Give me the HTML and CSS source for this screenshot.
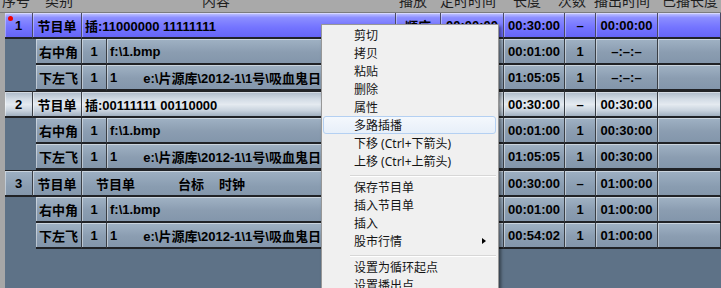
FILE: index.html
```html
<!DOCTYPE html>
<html lang="zh-CN">
<head>
<meta charset="utf-8">
<title>节目单</title>
<link rel="stylesheet" href="styles.css">
</head>
<body>
<div class="hdr">
  <div class="hdr-in">
    <span class="h1">序号</span><span class="h2">类别</span><span class="h3">内容</span><span class="h4">播放</span><span class="h5">定时时间</span><span class="h6">长度</span><span class="h7">次数</span><span class="h8">播出时间</span><span class="h9">已播长度</span>
  </div>
</div>
<div class="tbl">
  <div class="row main sel">
    <div class="c no"><i class="dot"></i>1</div>
    <div class="c">节目单</div>
    <div class="c txt">插:11000000 11111111</div>
    <div class="c">顺序</div>
    <div class="c">00:00:00</div>
    <div class="c">00:30:00</div>
    <div class="c">–</div>
    <div class="c">00:00:00</div>
    <div class="c"></div>
  </div>
  <div class="row sub">
    <div class="indent"></div>
    <div class="c">右中角</div>
    <div class="c">1</div>
    <div class="c txt">f:\1.bmp</div>
    <div class="c"></div>
    <div class="c">00:00:00</div>
    <div class="c">00:01:00</div>
    <div class="c">1</div>
    <div class="c">–:–:–</div>
    <div class="c"></div>
  </div>
  <div class="row sub">
    <div class="indent"></div>
    <div class="c">下左飞</div>
    <div class="c">1</div>
    <div class="c txt">1<span class="path">e:\片源库\2012-1\1号\吸血鬼日记.avi</span></div>
    <div class="c"></div>
    <div class="c">00:00:00</div>
    <div class="c">01:05:05</div>
    <div class="c">1</div>
    <div class="c">–:–:–</div>
    <div class="c"></div>
  </div>

  <div class="row main lite">
    <div class="c no">2</div>
    <div class="c">节目单</div>
    <div class="c txt">插:00111111 00110000</div>
    <div class="c">顺序</div>
    <div class="c"></div>
    <div class="c">00:30:00</div>
    <div class="c">–</div>
    <div class="c">00:30:00</div>
    <div class="c"></div>
  </div>
  <div class="row sub">
    <div class="indent"></div>
    <div class="c">右中角</div>
    <div class="c">1</div>
    <div class="c txt">f:\1.bmp</div>
    <div class="c"></div>
    <div class="c">00:00:00</div>
    <div class="c">00:01:00</div>
    <div class="c">1</div>
    <div class="c">00:30:00</div>
    <div class="c"></div>
  </div>
  <div class="row sub">
    <div class="indent"></div>
    <div class="c">下左飞</div>
    <div class="c">1</div>
    <div class="c txt">1<span class="path">e:\片源库\2012-1\1号\吸血鬼日记.avi</span></div>
    <div class="c"></div>
    <div class="c">00:00:00</div>
    <div class="c">01:05:05</div>
    <div class="c">1</div>
    <div class="c">00:30:00</div>
    <div class="c"></div>
  </div>

  <div class="row main">
    <div class="c no">3</div>
    <div class="c">节目单</div>
    <div class="c txt"><span class="t1">节目单</span><span class="t2">台标</span><span class="t3">时钟</span></div>
    <div class="c">顺序</div>
    <div class="c"></div>
    <div class="c">00:30:00</div>
    <div class="c">–</div>
    <div class="c">01:00:00</div>
    <div class="c"></div>
  </div>
  <div class="row sub">
    <div class="indent"></div>
    <div class="c">右中角</div>
    <div class="c">1</div>
    <div class="c txt">f:\1.bmp</div>
    <div class="c"></div>
    <div class="c">00:00:00</div>
    <div class="c">00:01:00</div>
    <div class="c">1</div>
    <div class="c">01:00:00</div>
    <div class="c"></div>
  </div>
  <div class="row sub">
    <div class="indent"></div>
    <div class="c">下左飞</div>
    <div class="c">1</div>
    <div class="c txt">1<span class="path">e:\片源库\2012-1\1号\吸血鬼日记.avi</span></div>
    <div class="c"></div>
    <div class="c">00:00:00</div>
    <div class="c">00:54:02</div>
    <div class="c">1</div>
    <div class="c">01:00:00</div>
    <div class="c"></div>
  </div>
</div>

<div class="menu">
  <div class="mi">剪切</div>
  <div class="mi">拷贝</div>
  <div class="mi">粘贴</div>
  <div class="mi">删除</div>
  <div class="mi">属性</div>
  <div class="mi hot">多路插播</div>
  <div class="mi">下移 (Ctrl+下箭头)</div>
  <div class="mi">上移 (Ctrl+上箭头)</div>
  <div class="sep"></div>
  <div class="mi">保存节目单</div>
  <div class="mi">插入节目单</div>
  <div class="mi">插入</div>
  <div class="mi sub-arrow">股市行情</div>
  <div class="sep"></div>
  <div class="mi">设置为循环起点</div>
  <div class="mi">设置播出点</div>
</div>
</body>
</html>
```

FILE: styles.css
```css
html, body {
  margin: 0;
  padding: 0;
}
body {
  background: #a7a7a7;
  width: 721px;
  height: 288px;
  overflow: hidden;
  position: relative;
  font-family: "Liberation Sans", "Noto Sans CJK SC", sans-serif;
}

/* header */
.hdr {
  height: 12px;
  border-bottom: 1px solid #7c7c7c;
  background: #a9a9a9;
  overflow: hidden;
  color: #1e1e1e;
  font-family: "Noto Sans CJK SC", sans-serif;
  font-size: 14px;
  white-space: nowrap;
}
.hdr-in {
  display: flex;
  margin-top: -8px;
  line-height: 16px;
}
.hdr-in span { flex: none; }
.h1 { margin-left: 2px; }
.h2 { margin-left: 15px; }
.h3 { margin-left: 129px; }
.h4 { margin-left: 169px; }
.h5 { margin-left: 13px; }
.h6 { margin-left: 17px; }
.h7 { margin-left: 17px; }
.h8 { margin-left: 8px; }
.h9 { margin-left: 12px; }

/* table */
.tbl {
  margin-left: 5px;
  background: #5e7287;
  height: 275px;
  overflow: hidden;
}
.row {
  display: grid;
}
.main {
  grid-template-columns: 28px 49px 314px 45px 63px 61px 31px 62px 1fr;
  background: linear-gradient(#9fb1c4, #8a9db1 60%, #8295aa);
}
.sub {
  grid-template-columns: 31px 46px 25px 289px 45px 63px 61px 31px 62px 1fr;
}
.indent {
  background: #5e7287;
}
.c {
  height: 24px;
  display: flex;
  align-items: center;
  justify-content: center;
  border-right: 1px solid #3a3f46;
  border-bottom: 2px solid #202226;
  box-shadow: inset 1px 1px 0 rgba(255, 255, 255, 0.45);
  font-size: 13px;
  font-weight: bold;
  color: #000;
  white-space: nowrap;
  overflow: hidden;
}
.sub .c {
  background: linear-gradient(#a0b2c4, #8b9db1 55%, #8396ab);
}
.sub + .main .c {
  border-top: 1px solid #202226;
}
.c.txt {
  justify-content: flex-start;
  padding-left: 3px;
}
.c.no {
  position: relative;
}
.dot {
  position: absolute;
  left: 3px;
  top: 3px;
  width: 5px;
  height: 5px;
  border-radius: 50%;
  background: #f00000;
}
.path { margin-left: 26px; }
.t1 { margin-left: 11px; }
.t2 { margin-left: 43px; }
.t3 { margin-left: 15px; }

/* selected row */
.sel {
  background: linear-gradient(#c6caff 0%, #8c8eff 18%, #7474ff 55%, #6262f4 100%);
}
.sel .c {
  border-right-color: #4a4a66;
  box-shadow: inset 1px 1px 0 rgba(255, 255, 255, 0.35);
}
/* light (silver) row */
.lite {
  background: linear-gradient(#a6b4c4 0%, #d2dbe5 30%, #e4eaf0 50%, #c9d3de 72%, #93a3b5 100%);
}

/* context menu */
.menu {
  position: absolute;
  left: 321px;
  top: 24px;
  width: 173px;
  height: 263px;
  padding: 1px 2px 0 1px;
  overflow: hidden;
  background: #f0f0f0;
  border: 1px solid #979797;
  border-bottom: 0;
  box-shadow: 2px 2px 3px rgba(0, 0, 0, 0.45);
  font-family: "Noto Sans", "Noto Sans CJK SC", sans-serif;
  font-size: 12px;
  color: #141414;
}
.mi {
  position: relative;
  height: 18px;
  line-height: 18px;
  padding-left: 30px;
  border: 1px solid transparent;
  box-sizing: border-box;
  border-radius: 3px;
  white-space: nowrap;
}
.mi.hot {
  border-color: #b4d0f2;
  background: linear-gradient(#f4f8fd, #e7eff9);
}
.sub-arrow::after {
  content: "";
  position: absolute;
  right: 9px;
  top: 5px;
  border-left: 4px solid #000;
  border-top: 3.5px solid transparent;
  border-bottom: 3.5px solid transparent;
}
.sep {
  height: 0;
  margin: 5px 0 1px 27px;
  border-top: 1px solid #d7d7d7;
  border-bottom: 1px solid #ffffff;
}
```
